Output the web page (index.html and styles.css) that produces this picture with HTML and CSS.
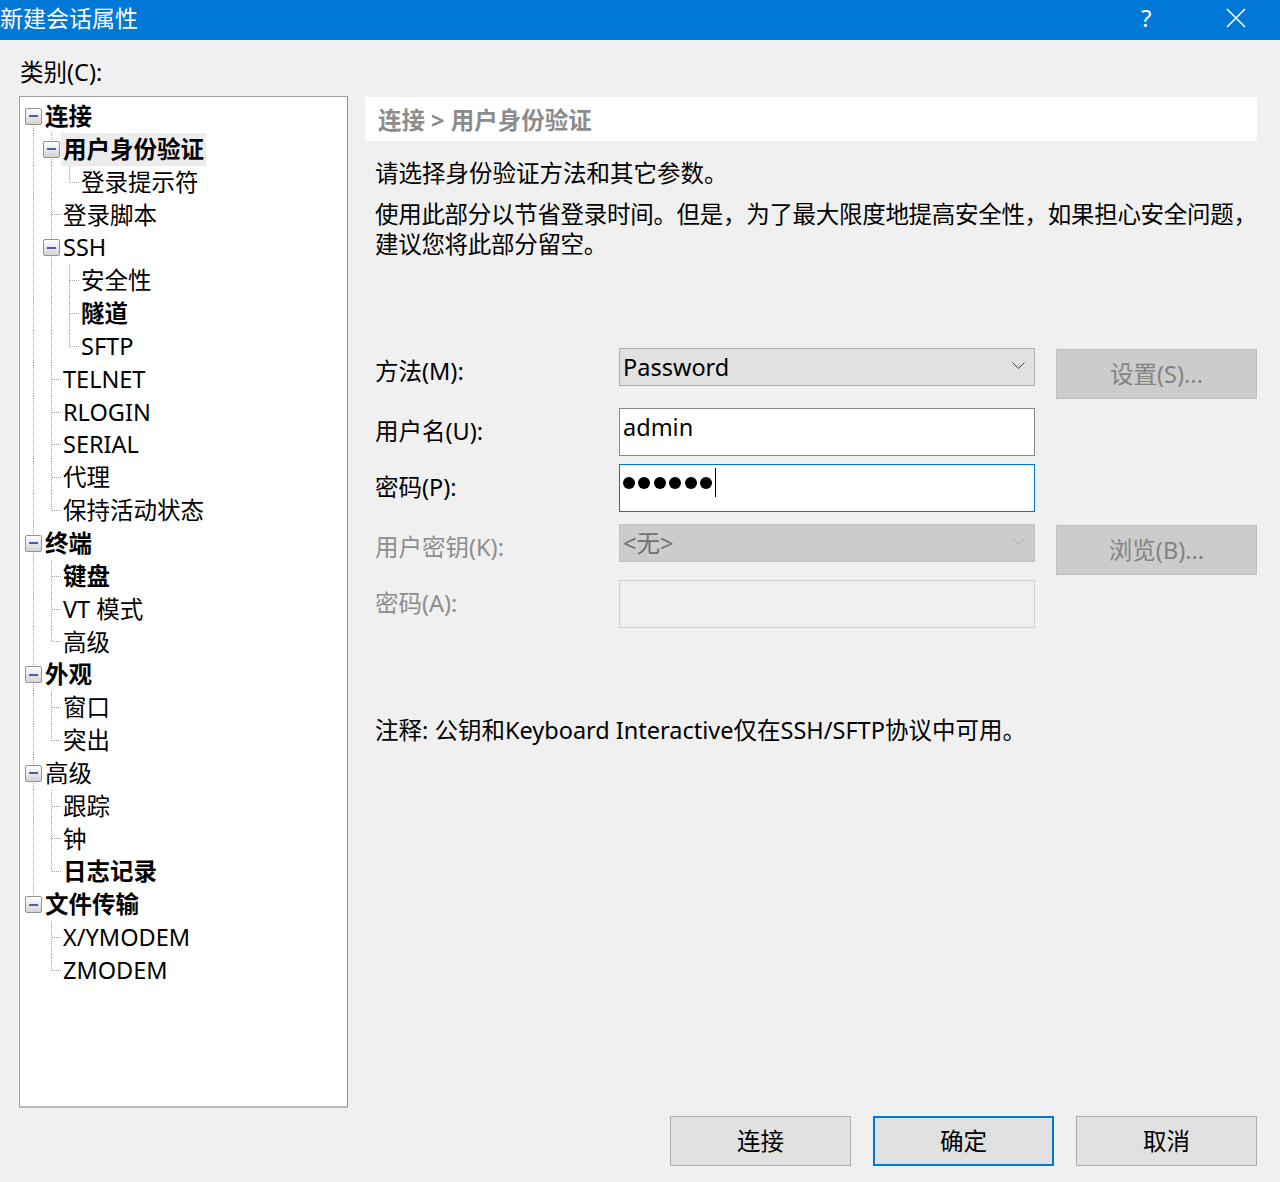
FILE: index.html
```html
<!DOCTYPE html>
<html lang="zh-CN">
<head>
<meta charset="utf-8">
<title>新建会话属性</title>
<link rel="stylesheet" href="styles.css">
</head>
<body>
<div class="titlebar">
  <span class="title">新建会话属性</span>
  <div class="tb-btns">
    <span class="help">?</span>
    <svg class="close" width="20" height="20" viewBox="0 0 20 20"><path d="M1 1 L19 19 M19 1 L1 19" stroke="#fff" stroke-width="1.6" fill="none"/></svg>
  </div>
</div>
<div class="main">
  <div class="cat-label">类别(C):</div>
  <div class="cols">
    <div class="tree">
      <div class="row"><span class="c exp-b"><span class="box"><span class="minus"></span></span></span><span class="t b">连接</span></div>
      <div class="row"><span class="g v"></span><span class="c exp-tb"><span class="box"><span class="minus"></span></span></span><span class="t b sel">用户身份验证</span></div>
      <div class="row"><span class="g v"></span><span class="g v"></span><span class="c elbow"></span><span class="t">登录提示符</span></div>
      <div class="row"><span class="g v"></span><span class="c tee"></span><span class="t">登录脚本</span></div>
      <div class="row"><span class="g v"></span><span class="c exp-tb"><span class="box"><span class="minus"></span></span></span><span class="t">SSH</span></div>
      <div class="row"><span class="g v"></span><span class="g v"></span><span class="c tee"></span><span class="t">安全性</span></div>
      <div class="row"><span class="g v"></span><span class="g v"></span><span class="c tee"></span><span class="t b">隧道</span></div>
      <div class="row"><span class="g v"></span><span class="g v"></span><span class="c elbow"></span><span class="t">SFTP</span></div>
      <div class="row"><span class="g v"></span><span class="c tee"></span><span class="t">TELNET</span></div>
      <div class="row"><span class="g v"></span><span class="c tee"></span><span class="t">RLOGIN</span></div>
      <div class="row"><span class="g v"></span><span class="c tee"></span><span class="t">SERIAL</span></div>
      <div class="row"><span class="g v"></span><span class="c tee"></span><span class="t">代理</span></div>
      <div class="row"><span class="g v"></span><span class="c elbow"></span><span class="t">保持活动状态</span></div>
      <div class="row"><span class="c exp-tb"><span class="box"><span class="minus"></span></span></span><span class="t b">终端</span></div>
      <div class="row"><span class="g v"></span><span class="c tee"></span><span class="t b">键盘</span></div>
      <div class="row"><span class="g v"></span><span class="c tee"></span><span class="t">VT 模式</span></div>
      <div class="row"><span class="g v"></span><span class="c elbow"></span><span class="t">高级</span></div>
      <div class="row"><span class="c exp-tb"><span class="box"><span class="minus"></span></span></span><span class="t b">外观</span></div>
      <div class="row"><span class="g v"></span><span class="c tee"></span><span class="t">窗口</span></div>
      <div class="row"><span class="g v"></span><span class="c elbow"></span><span class="t">突出</span></div>
      <div class="row"><span class="c exp-tb"><span class="box"><span class="minus"></span></span></span><span class="t">高级</span></div>
      <div class="row"><span class="g v"></span><span class="c tee"></span><span class="t">跟踪</span></div>
      <div class="row"><span class="g v"></span><span class="c tee"></span><span class="t">钟</span></div>
      <div class="row"><span class="g v"></span><span class="c elbow"></span><span class="t b">日志记录</span></div>
      <div class="row"><span class="c exp-t"><span class="box"><span class="minus"></span></span></span><span class="t b">文件传输</span></div>
      <div class="row"><span class="g"></span><span class="c tee"></span><span class="t">X/YMODEM</span></div>
      <div class="row"><span class="g"></span><span class="c elbow"></span><span class="t">ZMODEM</span></div>
    </div>
    <div class="panel">
      <div class="crumb">连接 &gt; 用户身份验证</div>
      <p class="p1">请选择身份验证方法和其它参数。</p>
      <p class="p2">使用此部分以节省登录时间。但是，为了最大限度地提高安全性，如果担心安全问题，<br>建议您将此部分留空。</p>
      <div class="form">
        <div class="lbl">方法(M):</div>
        <div class="select"><span class="val">Password</span><svg class="chev" width="13" height="8" viewBox="0 0 13 8"><path d="M0.5 0.5 L6.5 6.5 L12.5 0.5" stroke="#444" stroke-width="1" fill="none"/></svg></div>
        <div class="sbtn dis">设置(S)...</div>

        <div class="lbl">用户名(U):</div>
        <div class="input"><span class="val">admin</span></div>
        <div></div>

        <div class="lbl">密码(P):</div>
        <div class="input focus"><span class="dots"><i></i><i></i><i></i><i></i><i></i><i></i></span><span class="caret"></span></div>
        <div></div>

        <div class="lbl dlbl">用户密钥(K):</div>
        <div class="select dis"><span class="val">&lt;无&gt;</span><svg class="chev" width="13" height="8" viewBox="0 0 13 8"><path d="M0.5 0.5 L6.5 6.5 L12.5 0.5" stroke="#a8a8a8" stroke-width="1" fill="none"/></svg></div>
        <div class="sbtn dis">浏览(B)...</div>

        <div class="lbl dlbl">密码(A):</div>
        <div class="input dis"></div>
        <div></div>
      </div>
      <p class="note">注释: 公钥和Keyboard Interactive仅在SSH/SFTP协议中可用。</p>
    </div>
  </div>
  <div class="footer">
    <div class="btn">连接</div>
    <div class="btn def">确定</div>
    <div class="btn">取消</div>
  </div>
</div>
</body>
</html>
```

FILE: styles.css
```css
:root {
  --dv: repeating-linear-gradient(to bottom, #a0a0a0 0 1px, transparent 1px 2px);
  --dh: repeating-linear-gradient(to right, #a0a0a0 0 1px, transparent 1px 2px);
}
* { box-sizing: border-box; }
html, body { margin: 0; padding: 0; }
body {
  width: 1280px;
  height: 1182px;
  overflow: hidden;
  background: #f0f0f0;
  font-family: "Noto Sans", "Noto Sans CJK SC", sans-serif;
  font-size: 23.5px;
  color: #000;
}
.titlebar {
  height: 40px;
  background: #0078d7;
  color: #fff;
  display: flex;
  align-items: center;
  justify-content: space-between;
}
.title { font-size: 23px; line-height: 36px; margin-top: -4px; }
.tb-btns { display: flex; align-items: center; padding-right: 34px; }
.help { font-size: 24px; line-height: 30px; margin-top: -4px; width: 12px; }
.close { margin-left: 73px; margin-top: -4px; }

.main { padding: 17px 23px 0 19px; }
.cat-label { height: 30px; line-height: 30px; margin-left: 1px; margin-bottom: 9px; }
.cols { display: flex; gap: 17px; }

.tree {
  width: 329px;
  height: 1012px;
  flex: none;
  background: #fff;
  border: 1px solid #a0a0a0;
  border-right-color: #8e8e8e;
  border-bottom: 2px solid #b8b8b8;
  padding: 3px 0 0 5px;
}
.row { display: flex; height: 32.85px; }
.g, .c { width: 18px; flex: none; background-repeat: no-repeat; }
.v { background-image: var(--dv); background-position: 8px 0; background-size: 1px 100%; }
.tee {
  background-image: var(--dv), var(--dh);
  background-position: 8px 0, 9px 50%;
  background-size: 1px 100%, 9px 1px;
}
.elbow {
  background-image: var(--dv), var(--dh);
  background-position: 8px 0, 9px 50%;
  background-size: 1px 50%, 9px 1px;
}
.exp-b, .exp-t, .exp-tb { display: flex; align-items: center; }
.exp-b { background-image: var(--dv); background-position: 8px 100%; background-size: 1px 50%; }
.exp-t { background-image: var(--dv); background-position: 8px 0; background-size: 1px 50%; }
.exp-tb { background-image: var(--dv); background-position: 8px 0; background-size: 1px 100%; }
.box {
  width: 17px;
  height: 17px;
  border: 1px solid #939393;
  border-radius: 2px;
  background: linear-gradient(#ffffff, #e6e6e6 55%, #d4d4d4);
  display: flex;
  align-items: center;
  justify-content: center;
}
.minus { width: 9px; height: 2px; background: #4360ad; }
.t { padding: 0 2px; line-height: 32.85px; white-space: nowrap; }
.b { font-weight: 700; }
.sel { background: #ececec; }

.panel { flex: 1; min-width: 0; padding-top: 1px; }
.crumb {
  height: 44px;
  background: #fff;
  padding-left: 13px;
  line-height: 46px;
  font-weight: 700;
  color: #8c8c8c;
}
.panel p { margin: 0; padding-left: 10px; line-height: 30px; }
.p1 { margin-top: 17px !important; }
.p2 { margin-top: 11px !important; white-space: nowrap; letter-spacing: -0.3px; }

.form {
  margin-top: 89px;
  margin-left: 10px;
  display: grid;
  grid-template-columns: 244px 416px 1fr;
  grid-template-rows: 60px 56px 60px 56px 48px;
}
.lbl { padding-top: 8px; line-height: 30px; }
.dlbl { color: #8d8d8d; }
.select {
  height: 38px;
  background: #e1e1e1;
  border: 1px solid #adadad;
  display: flex;
  align-items: center;
  justify-content: space-between;
  padding: 0 9px 0 3px;
}
.select .val { line-height: 36px; }
.select.dis { background: #cccccc; border-color: #c4c4c4; color: #707070; }
.chev { margin-top: -2px; }
.sbtn {
  margin-top: 1px;
  margin-left: 21px;
  height: 50px;
  border: 1px solid #adadad;
  background: #e1e1e1;
  text-align: center;
  line-height: 48px;
}
.sbtn.dis { background: #cccccc; border-color: #bfbfbf; color: #838383; }
.input {
  height: 48px;
  background: #fff;
  border: 1px solid #8a8a8a;
  padding: 3px 3px 0;
  display: flex;
  align-items: flex-start;
}
.input .val { line-height: 30px; }
.input.focus { border-color: #0078d7; padding-top: 0; align-items: center; }
.input.dis { background: #f0f0f0; border-color: #cfcfcf; }
.dots { display: flex; gap: 3.4px; margin-top: -10px; }
.dots i { width: 12px; height: 12px; border-radius: 50%; background: #000; display: block; }
.caret { width: 1.5px; height: 29px; background: #000; margin-left: 3px; margin-top: -11px; }
.note { margin-top: 87px !important; }

.footer { display: flex; justify-content: flex-end; gap: 22px; margin-top: 8px; }
.btn {
  width: 181px;
  height: 50px;
  border: 1px solid #adadad;
  background: #e1e1e1;
  text-align: center;
  line-height: 48px;
}
.btn.def { border: 2px solid #0078d7; line-height: 46px; }
```
